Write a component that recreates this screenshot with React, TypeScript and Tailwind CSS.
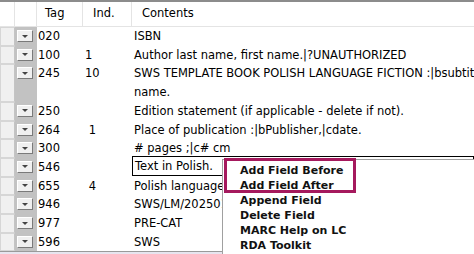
import React from "react";

type Row = { tag: string; ind: string; text: string[] };

const ROWS: Row[] = [
  { tag: "020", ind: "", text: ["ISBN"] },
  { tag: "100", ind: "1 ", text: ["Author last name, first name.|?UNAUTHORIZED"] },
  { tag: "245", ind: "10", text: ["SWS TEMPLATE BOOK POLISH LANGUAGE FICTION :|bsubtitle", "name."] },
  { tag: "250", ind: "", text: ["Edition statement (if applicable - delete if not)."] },
  { tag: "264", ind: " 1", text: ["Place of publication :|bPublisher,|cdate."] },
  { tag: "300", ind: "", text: ["# pages ;|c# cm"] },
  { tag: "546", ind: "", text: ["Text in Polish."] },
  { tag: "655", ind: " 4", text: ["Polish language materials."] },
  { tag: "946", ind: "", text: ["SWS/LM/20250101"] },
  { tag: "977", ind: "", text: ["PRE-CAT"] },
  { tag: "596", ind: "", text: ["SWS"] },
];

const MENU = ["Add Field Before", "Add Field After", "Append Field", "Delete Field", "MARC Help on LC", "RDA Toolkit"];

function DropButton() {
  return (
    <div className="mt-[3px] ml-[2px] w-[16px] h-[12px] bg-[#f0f0f0] border-t border-l border-t-white border-l-white border-r border-b border-r-[#7a7a7a] border-b-[#7a7a7a] flex items-center justify-center">
      <div className="w-0 h-0 border-l-[3px] border-r-[3px] border-t-[3px] border-l-transparent border-r-transparent border-t-[#444]" />
    </div>
  );
}

export default function App() {
  return (
    <div className="relative w-[474px] h-[254px] overflow-hidden bg-white text-black text-[11.5px] font-['DejaVu_Sans',sans-serif]">
      {/* header */}
      <div className="flex h-[27px] border-t-2 border-[#8c8c8c]">
        <div className="flex w-full border-b border-[#e4e4e4]">
          <div className="w-[15px] border-r border-[#e4e4e4]" />
          <div className="w-[22px] border-r border-[#e4e4e4]" />
          <div className="w-[46px] pl-[8px] flex items-center border-r border-[#e4e4e4]">Tag</div>
          <div className="w-[49px] pl-[10px] flex items-center border-r border-[#e4e4e4]">Ind.</div>
          <div className="flex-1 pl-[10px] flex items-center">Contents</div>
        </div>
      </div>

      {/* rows */}
      <div className="flex flex-col">
        {ROWS.map((r) => (
          <div key={r.tag} className="flex leading-[18.7px]">
            <div className="w-[15px] shrink-0 bg-[#f0f0f0] border border-[#d6d6d6] border-r-[#c4c4c4]" />
            <div className="w-[22px] shrink-0 bg-[#c2c2c2]">
              <DropButton />
            </div>
            <div className="w-[46px] shrink-0 pl-[1px]">{r.tag}</div>
            <div className="w-[49px] shrink-0 pl-[2px] whitespace-pre">{r.ind}</div>
            <div
              className={`flex-1 min-w-0 pl-[2px] whitespace-nowrap overflow-hidden ${
                r.tag === "546" ? "border border-black -mt-[2px] h-[20px] pl-[1px]" : ""
              }`}
            >
              {r.text.map((t) => (
                <div key={t}>{t}</div>
              ))}
            </div>
          </div>
        ))}
      </div>
      <div className="h-[4px] border-t border-[#9a9a9a] bg-[#e7e5ef]" />

      {/* context menu */}
      <div className="absolute left-[222px] top-[159px] right-0 bottom-0 bg-white border-l border-t border-[#a0a0a0] pl-[17px] pt-[3px] font-bold text-[11px] leading-[15px] text-[#111]">
        {MENU.map((m) => (
          <div key={m}>{m}</div>
        ))}
      </div>
      <div className="absolute left-[224px] top-[158px] w-[132px] h-[35px] border-[3px] border-[#a5195d]" />
    </div>
  );
}
